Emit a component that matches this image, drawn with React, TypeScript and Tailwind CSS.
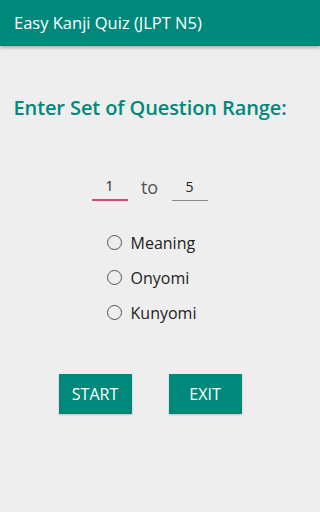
import React from 'react';

const options = ['Meaning', 'Onyomi', 'Kunyomi'];

export default function App() {
  return (
    <div
      className="w-full h-[512px] bg-[#eeeeee] flex flex-col"
      style={{ fontFamily: '"Open Sans", "Noto Sans", sans-serif' }}
    >
      {/* Toolbar */}
      <div className="h-[46px] bg-[#00897b] flex items-center px-[14px] shadow-[0_2px_3px_rgba(0,0,0,0.25)]">
        <span className="text-white text-[16.5px]">Easy Kanji Quiz (JLPT N5)</span>
      </div>

      <div className="w-[300px] flex flex-col items-center">
        <h1 className="mt-[47px] text-[#00897b] text-[20px] font-semibold tracking-[-0.1px]">
          Enter Set of Question Range:
        </h1>

        {/* Range inputs */}
        <div className="mt-[52px] flex items-end gap-[12px] ml-[-1px]">
          <div className="w-[36px] flex flex-col items-center">
            <span className="text-[14px] text-[#222] leading-[20px]">1</span>
            <div className="mt-[3px] h-[2px] w-full bg-[#d9467c]" />
          </div>
          <span className="text-[18px] text-[#555] leading-[24px] mb-[2px] w-[20px] text-center">to</span>
          <div className="w-[36px] flex flex-col items-center">
            <span className="text-[14px] text-[#222] leading-[20px]">5</span>
            <div className="mt-[3px] h-px w-full bg-[#888]" />
          </div>
        </div>

        {/* Radio options */}
        <div className="mt-[30px] flex flex-col gap-[12px] ml-[3px]">
          {options.map((o) => (
            <label key={o} className="flex items-center h-[23px] gap-[9px]">
              <span className="w-[15px] h-[15px] rounded-full border-[1.5px] border-[#555]" />
              <span className="text-[16px] text-[#222]">{o}</span>
            </label>
          ))}
        </div>

        {/* Buttons */}
        <div className="mt-[50px] flex gap-[37px]">
          <button className="w-[73px] h-[40px] bg-[#00897b] text-white text-[16px] shadow-[0_1px_2px_rgba(0,0,0,0.2)]">
            START
          </button>
          <button className="w-[73px] h-[40px] bg-[#00897b] text-white text-[16px] shadow-[0_1px_2px_rgba(0,0,0,0.2)]">
            EXIT
          </button>
        </div>
      </div>
    </div>
  );
}
